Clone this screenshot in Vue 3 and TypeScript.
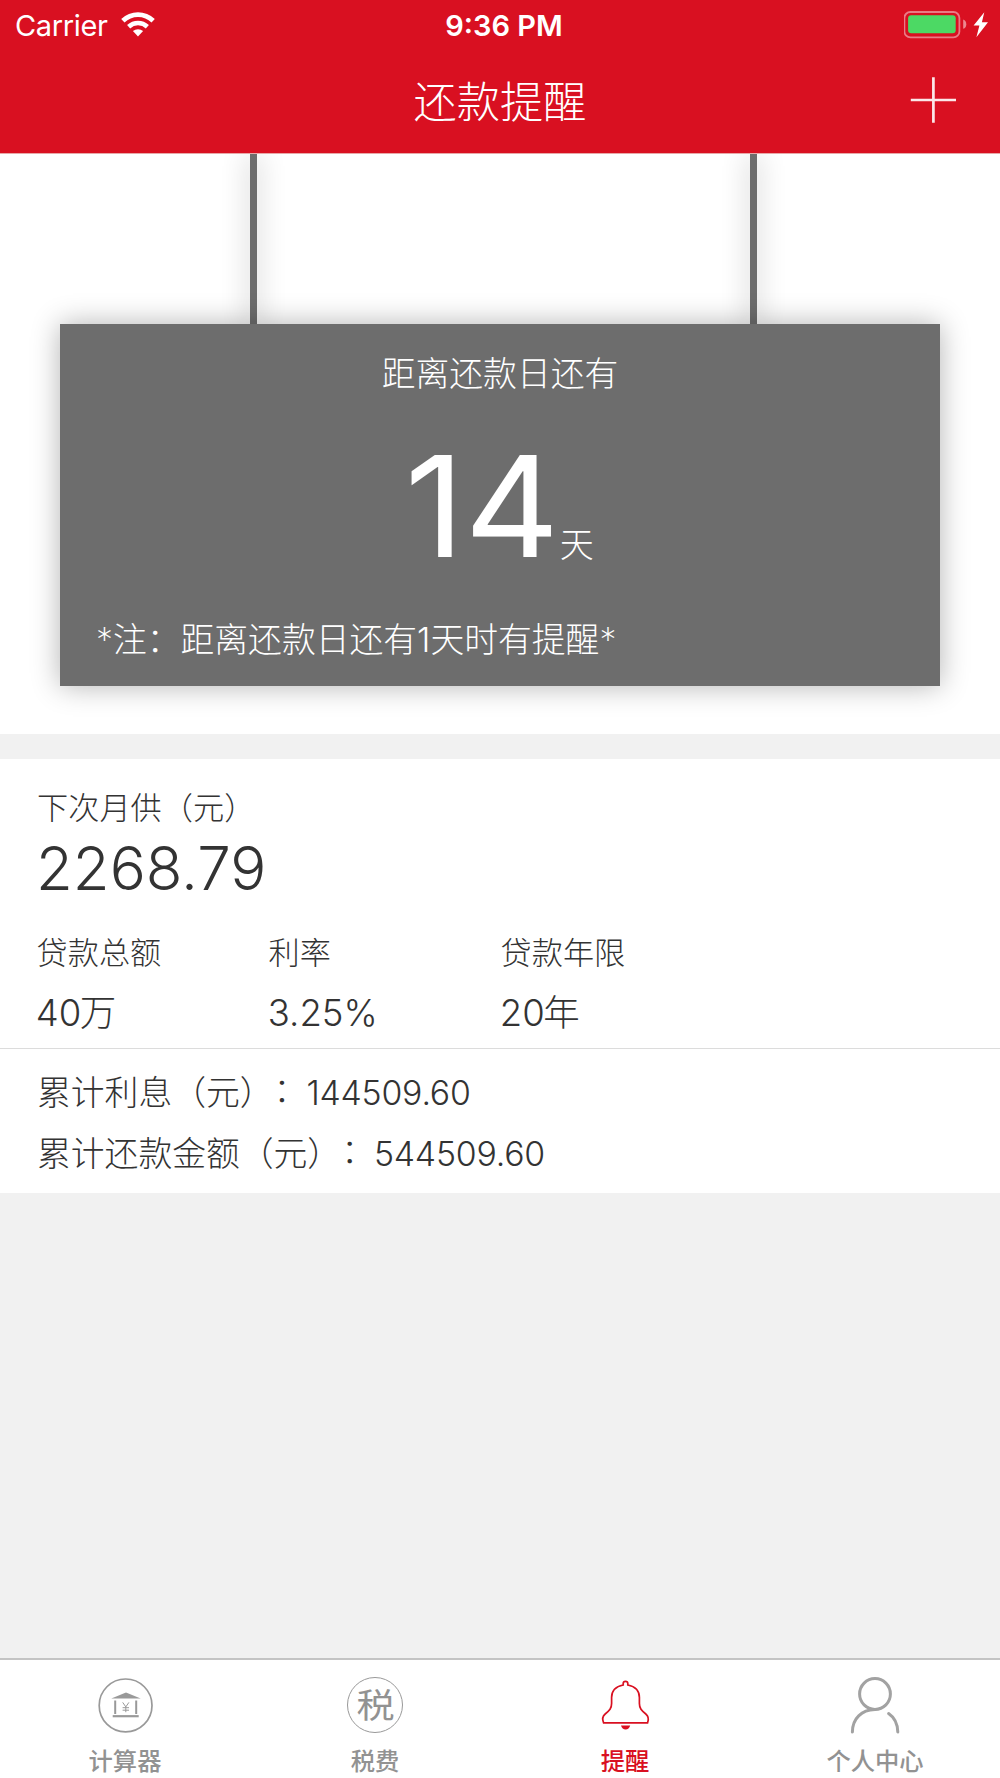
<script setup lang="ts">
interface Fact {
  label: string
  value: string
  unit: string
}

interface Tab {
  key: string
  label: string
}

const daysLeft = 14
const facts: Fact[] = [
  { label: '贷款总额', value: '40', unit: '万' },
  { label: '利率', value: '3.25%', unit: '' },
  { label: '贷款年限', value: '20', unit: '年' },
]
const totals = [
  { label: '累计利息（元）', value: '144509.60' },
  { label: '累计还款金额（元）', value: '544509.60' },
]
const tabs: Tab[] = [
  { key: 'calc', label: '计算器' },
  { key: 'tax', label: '税费' },
  { key: 'remind', label: '提醒' },
  { key: 'me', label: '个人中心' },
]
const active = 'remind'
</script>

<template>
  <div class="screen">
    <header class="header">
      <div class="status">
        <div class="carrier">
          <span>Carrier</span>
          <svg width="34" height="26" viewBox="0 0 34 26" fill="#fff">
            <path d="M0.2 7.1A24.3 24.3 0 0 1 33.8 7.1L30.5 10.6A19.2 19.2 0 0 0 3.5 10.6Z" />
            <path d="M6.1 13A16.1 16.1 0 0 1 27.9 13L24.8 16.4A11.4 11.4 0 0 0 9.2 16.4Z" />
            <path d="M11.9 19.1A7.6 7.6 0 0 1 22.1 19.1L17 24.4Z" />
          </svg>
        </div>
        <div class="time">9:36 PM</div>
        <div class="power">
          <svg width="90" height="30" viewBox="0 0 90 30">
            <rect x="0.4" y="1" width="55" height="25.4" rx="6" fill="none" stroke="#fff" stroke-opacity=".45" stroke-width="1.8" />
            <rect x="4.1" y="4.3" width="47.6" height="18" rx="3" fill="#4cd964" />
            <path d="M59.2 8.4Q62.3 9.6 62.3 13.2T59.2 17.8Z" fill="#fff" fill-opacity=".5" />
            <path d="M80.3 1.3L69.6 14.6H75.4L72.4 26.3L84 11.3H77.9Z" fill="#fff" />
          </svg>
        </div>
      </div>
      <div class="navbar">
        <h1>还款提醒</h1>
        <svg class="plus" width="46" height="46" viewBox="0 0 46 46" stroke="#fff" stroke-width="2.7" stroke-opacity=".9">
          <path d="M0.8 23H46M23.4 0.3V45.7" />
        </svg>
      </div>
    </header>

    <section class="hero">
      <div class="strings"><i /><i /></div>
      <div class="board">
        <p class="caption">距离还款日还有</p>
        <p class="days"><b>{{ daysLeft }}</b><span>天</span></p>
        <p class="note"><span class="star">*</span>注<span class="colon">：</span>距离还款日还有1天时有提醒<span class="star">*</span></p>
      </div>
    </section>

    <section class="loan">
      <p class="next-label">下次月供（元）</p>
      <p class="next-value">2268.79</p>
      <div class="facts">
        <div v-for="f in facts" :key="f.label" class="fact">
          <p class="fact-label">{{ f.label }}</p>
          <p class="fact-value"><span class="light">{{ f.value }}</span><span class="unit">{{ f.unit }}</span></p>
        </div>
      </div>
      <div class="totals">
        <p v-for="t in totals" :key="t.label">{{ t.label }}<span class="colon">：</span><span class="num">{{ t.value }}</span></p>
      </div>
    </section>

    <nav class="tabs">
      <div v-for="t in tabs" :key="t.key" class="tab" :class="{ on: t.key === active }">
        <svg v-if="t.key === 'calc'" width="60" height="60" viewBox="0 0 60 60">
          <circle cx="30.6" cy="30.4" r="26.4" fill="none" stroke="#999" stroke-width="1.7" />
          <path d="M16.3 23.4L31 17.6L45.7 23.4Z" fill="#999" />
          <path d="M20.2 25.4V38.9M41.2 25.4V38.9" stroke="#999" stroke-width="2" />
          <path d="M17.7 41.2H43.7" stroke="#999" stroke-width="2.2" />
          <path d="M27.7 27.4L30.8 31.9L33.9 27.4M30.8 31.9V37.2M27.6 32.7H34M27.6 35.2H34" fill="none" stroke="#999" stroke-width="1" />
        </svg>
        <div v-else-if="t.key === 'tax'" class="tax"><span>税</span></div>
        <svg v-else-if="t.key === 'remind'" width="60" height="60" viewBox="0 -1 60 60" fill="none" stroke="#d91021" stroke-width="1.7">
          <path d="M28.2 9V7.6A2.3 2.3 0 0 1 32.8 7.6V9C40.5 10.6 44.4 15.6 44.4 21.5V27.5C44.4 32.5 46.5 34.5 50.8 38C53.6 40.3 53.8 43.5 52.6 46.8H8.6C7.2 43.5 7.4 40.3 10.2 38C14.5 34.5 16.6 32.5 16.6 27.5V21.5C16.6 15.6 20.5 10.6 28.2 9Z" />
          <path d="M26 49.5H35.2Q34 53.6 30.6 53.6T26 49.5Z" fill="#d91021" stroke="none" />
        </svg>
        <svg v-else width="60" height="60" viewBox="0 -1 60 60" fill="none" stroke="#a2a2a2" stroke-width="3" stroke-linecap="round">
          <circle cx="30" cy="18" r="15.4" />
          <path d="M30 33.6C16.5 34 7.5 42.5 7.4 56M43.6 37.5C49.5 41.5 52.6 47.5 52.8 56" />
        </svg>
        <span class="tab-label">{{ t.label }}</span>
      </div>
    </nav>
  </div>
</template>

<style>
body {
  background: #f1f1f1;
}
</style>

<style scoped>
.screen {
  width: 1000px;
  height: 1778px;
  display: flex;
  flex-direction: column;
  background: #f1f1f1;
  color: #333;
  font-family: Inter, "Noto Sans CJK SC", sans-serif;
  font-weight: 300;
  text-spacing-trim: space-all;
  overflow: hidden;
}
p,
h1 {
  margin: 0;
  white-space: nowrap;
  font-weight: 300;
}
svg {
  display: block;
  flex: none;
}
.header {
  height: 153px;
  background: #d91021;
  border-bottom: 1px solid #e8a8a8;
  color: #fff;
  flex: none;
}
.status {
  height: 50px;
  display: grid;
  grid-template-columns: 1fr auto 1fr;
  font-size: 29px;
  line-height: 52px;
  font-weight: 400;
}
.carrier {
  display: flex;
  padding-left: 15px;
  gap: 13px;
  letter-spacing: -0.35px;
}
.carrier svg {
  margin-top: 12px;
}
.time {
  font-weight: 600;
  padding-left: 8px;
}
.power {
  display: flex;
  justify-content: flex-end;
  padding: 11px 6px 0 0;
}
.navbar {
  height: 103px;
  display: grid;
  grid-template-columns: 1fr auto 1fr;
}
.navbar h1 {
  grid-column: 2;
  font-size: 43.2px;
  line-height: 105px;
}
.plus {
  justify-self: end;
  margin: 27px 44px 0 0;
}
.hero {
  height: 580px;
  background: #fff;
  flex: none;
  display: flex;
  flex-direction: column;
}
.strings {
  height: 170px;
  display: flex;
  justify-content: space-between;
  padding: 0 243px 0 250px;
  overflow: hidden;
}
.strings i {
  width: 7px;
  background: #6d6d6d;
  box-shadow: 0 0 27px rgba(0, 0, 0, 0.3);
}
.board {
  height: 362px;
  margin: 0 60px;
  background: #6d6d6d;
  box-shadow: 0 0 27px rgba(0, 0, 0, 0.3);
  color: #fff;
  display: flex;
  flex-direction: column;
}
.caption {
  margin-top: 26px;
  text-align: center;
  font-size: 33.8px;
  line-height: 48px;
}
.days {
  height: 177px;
  display: flex;
  justify-content: center;
  align-items: baseline;
  line-height: 216px;
}
.days b {
  font-size: 140px;
  font-weight: 400;
  transform: scaleX(1.05);
  transform-origin: right center;
}
.days span {
  font-size: 34px;
  margin-right: -6px;
}
.note {
  margin-top: 41px;
  padding-left: 36px;
  font-size: 33.8px;
  line-height: 47px;
}
.star {
  font-weight: 250;
}
.loan {
  margin-top: 25px;
  height: 434px;
  background: #fff;
  flex: none;
}
.next-label {
  padding: 26px 0 0 37px;
  font-size: 31.2px;
  line-height: 46px;
}
.next-value {
  padding-left: 36px;
  font-size: 60px;
  line-height: 74px;
  font-weight: 260;
}
.facts {
  display: flex;
  padding: 25px 0 0 36.5px;
  height: 118px;
  border-bottom: 1px solid #dcdcdc;
}
.fact {
  width: 232px;
}
.fact-label {
  font-size: 31.2px;
  line-height: 46px;
}
.fact-value {
  margin: 13px 0 0 -0.7px;
  font-size: 36.5px;
  line-height: 48px;
}
.light {
  font-weight: 260;
}
.unit {
  margin-left: -1.5px;
}
.totals {
  padding: 13px 0 0 37px;
}
.totals p {
  font-size: 33.8px;
  line-height: 61px;
}
.totals .colon {
  position: relative;
  top: -3px;
}
.num {
  margin-left: -1px;
  letter-spacing: -0.2px;
  font-weight: 260;
}
.tabs {
  margin-top: auto;
  height: 118px;
  border-top: 2px solid #c4c4c4;
  background: #fff;
  display: flex;
}
.tab {
  flex: 1;
  display: flex;
  flex-direction: column;
  align-items: center;
  padding-top: 15px;
  color: #929292;
}
.tab.on {
  color: #d91021;
}
.tab-label {
  font-size: 24.3px;
  line-height: 36px;
  font-weight: 500;
  margin-top: 8px;
}
.tax {
  width: 56px;
  height: 56px;
  margin: 2px;
  box-sizing: border-box;
  border: 1px solid #999;
  border-radius: 50%;
  display: flex;
  align-items: center;
  justify-content: center;
  font-size: 37px;
  line-height: 56px;
  font-weight: 400;
}
.tax span {
  transform: translateY(1.5px) scale(1.03, 0.92);
}
</style>
